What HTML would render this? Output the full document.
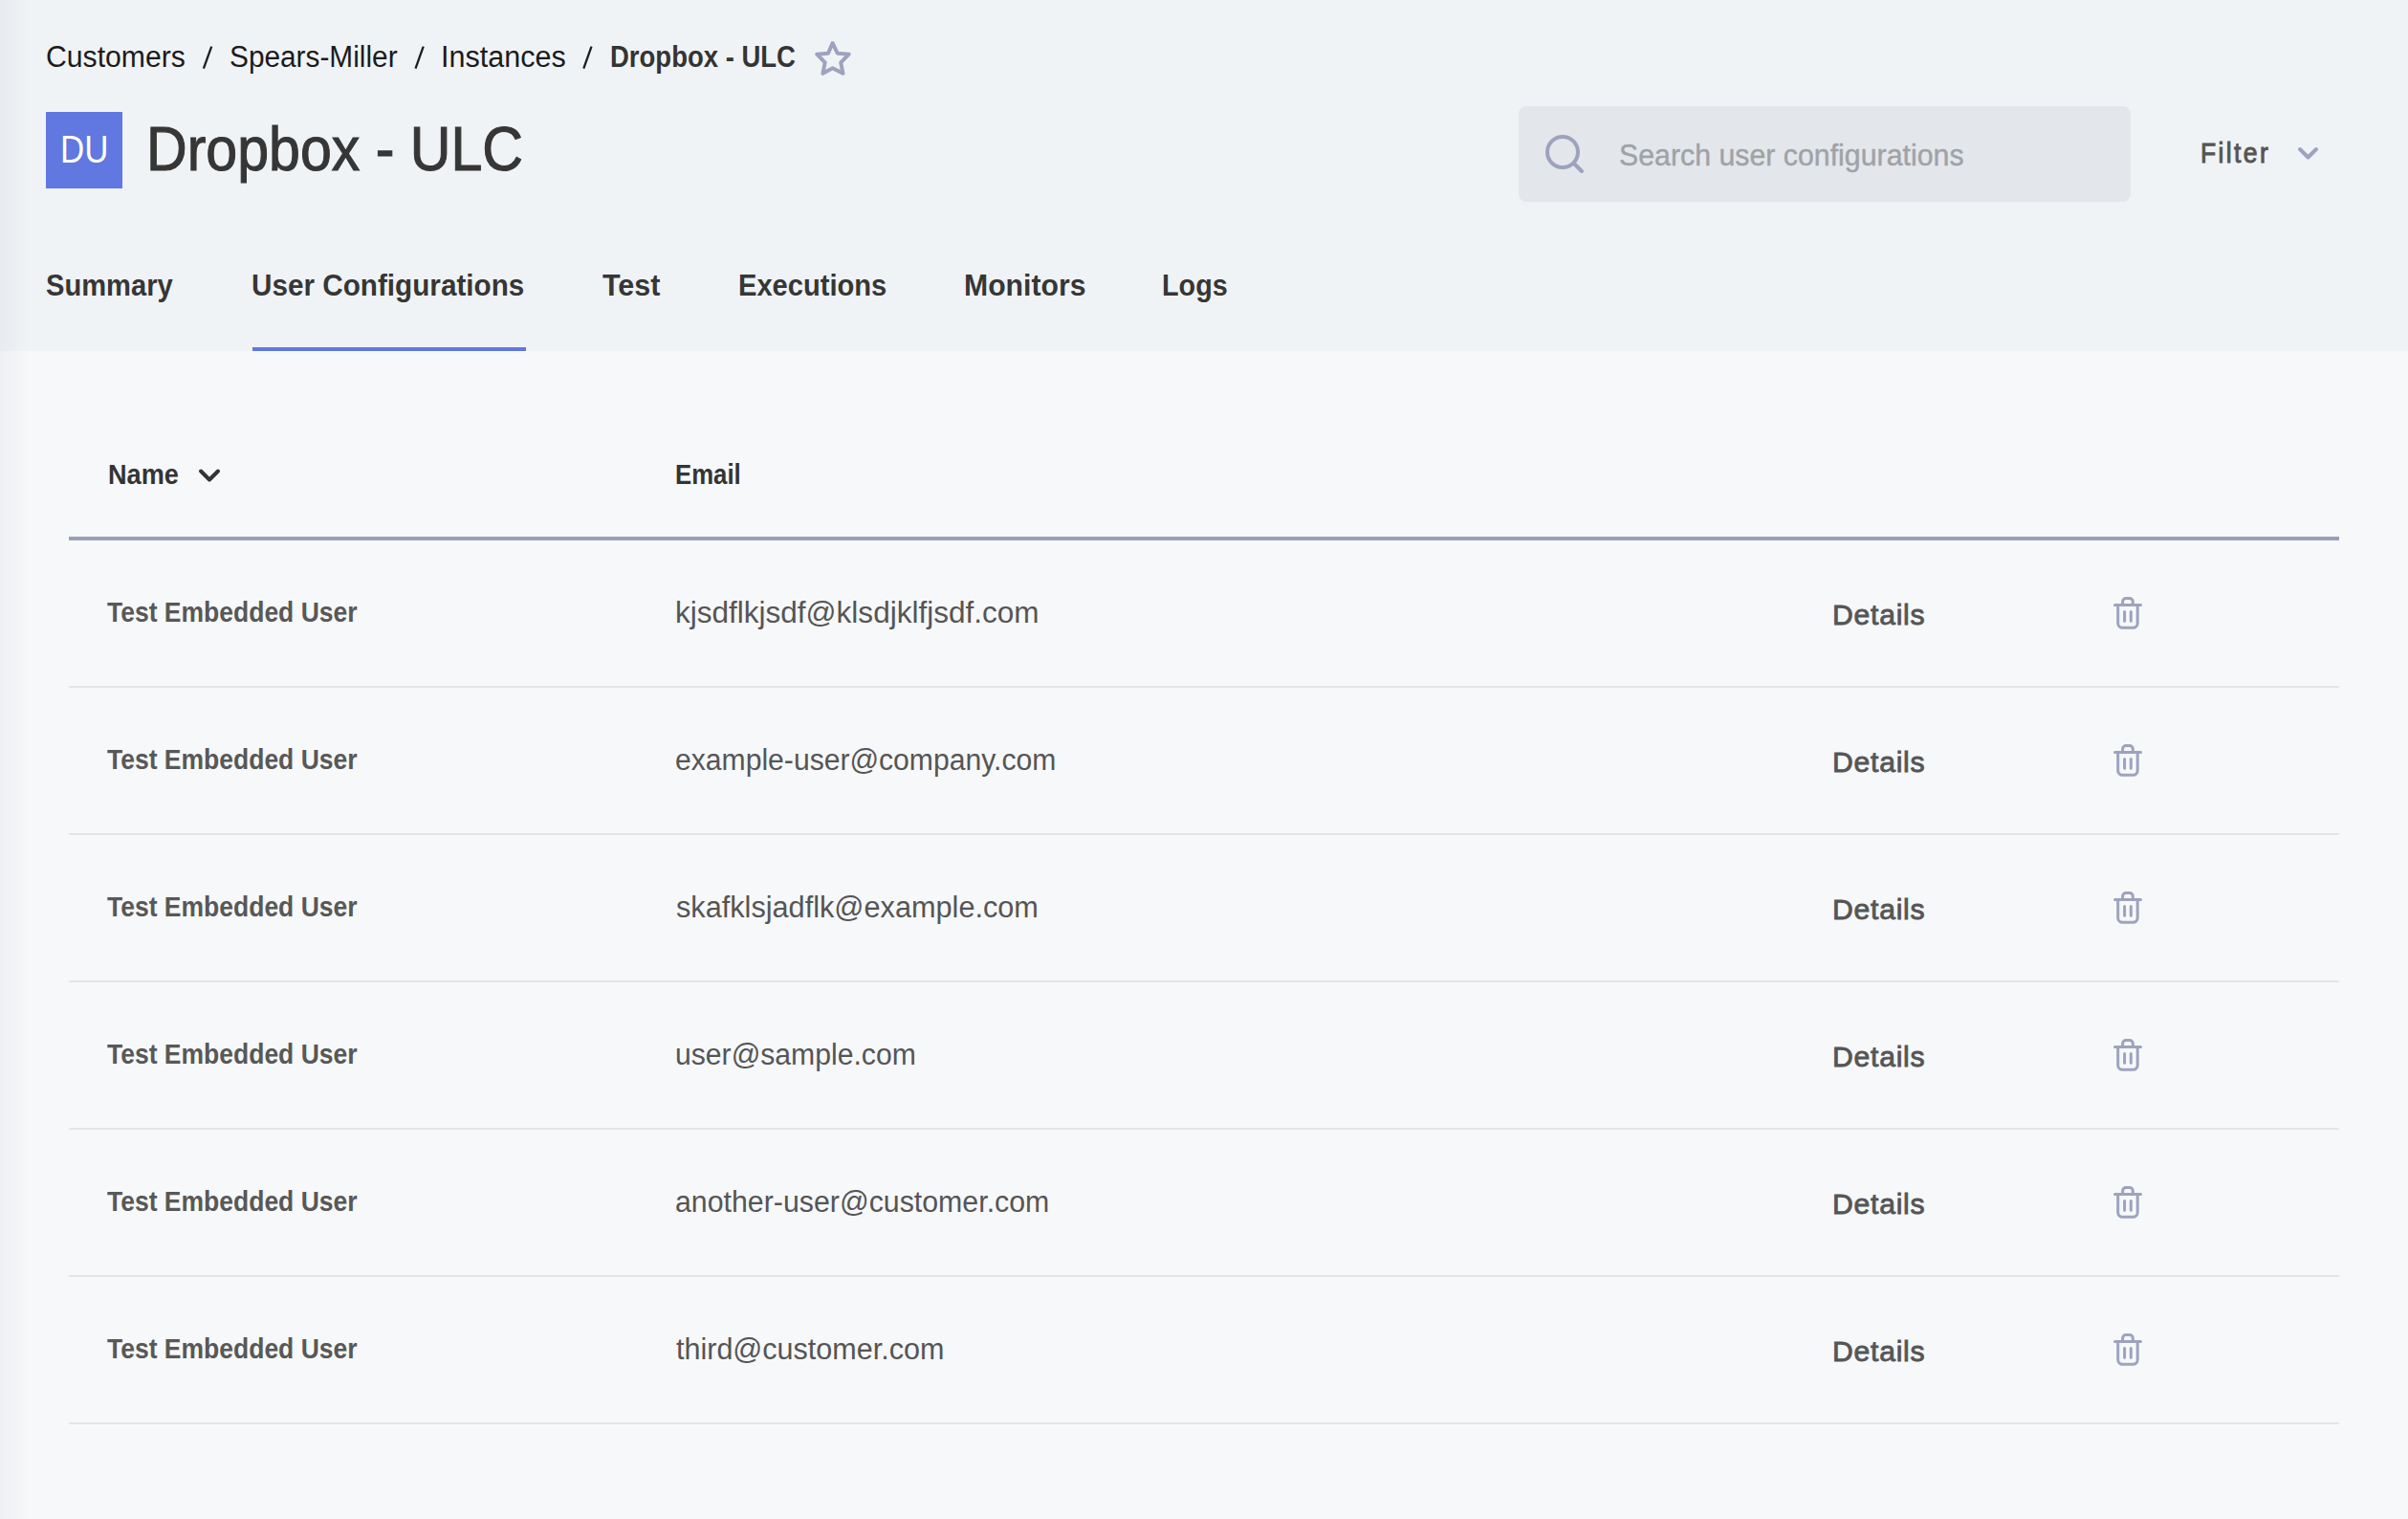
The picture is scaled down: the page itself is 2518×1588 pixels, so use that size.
<!DOCTYPE html>
<html><head><meta charset="utf-8"><style>
*{margin:0;padding:0;box-sizing:border-box}
html,body{width:2518px;height:1588px;overflow:hidden}
body{position:relative;background:#f7f8fa;font-family:"Liberation Sans",sans-serif;}
.t{position:absolute;white-space:nowrap;line-height:1;transform-origin:0 0}
</style></head><body>
<div style="position:absolute;left:0;top:0;width:2518px;height:367px;background:#f0f3f6"></div>
<svg style="position:absolute;left:0;top:0" width="700" height="90"><g stroke="#1e1e1e" stroke-width="2.3"><path d="M221.2 48.6 L212.9 71.6"/><path d="M442.7 48.6 L434.5 71.6"/><path d="M618.5 48.6 L610.3 71.6"/></g></svg>
<svg style="position:absolute;left:840px;top:35px" width="60" height="50" viewBox="0 0 60 50"><path d="M30.6 10 L35.7 20.7 L47.7 21.7 L39.2 30.3 L41.5 41.8 L30.6 36.2 L20.4 41.8 L22.7 30.3 L14.2 21.7 L26 20.7 Z" fill="none" stroke="#9da3be" stroke-width="4" stroke-linejoin="round"/></svg>
<div style="position:absolute;left:48px;top:117px;width:80px;height:80px;background:#6078e0"></div>
<div style="position:absolute;left:1588px;top:111px;width:640px;height:100px;background:#e3e7eb;border-radius:8px"></div>
<svg style="position:absolute;left:1610px;top:135px" width="56" height="56" viewBox="0 0 56 56"><circle cx="24" cy="24" r="16" fill="none" stroke="#9da3be" stroke-width="4"/><path d="M35.5 35.5 L44 44" stroke="#9da3be" stroke-width="4" stroke-linecap="round"/></svg>
<svg style="position:absolute;left:2400px;top:150px" width="28" height="20" viewBox="0 0 28 20"><path d="M5 6 L13.5 14.5 L22 6" fill="none" stroke="#9da3be" stroke-width="4" stroke-linecap="round" stroke-linejoin="round"/></svg>
<div style="position:absolute;left:264px;top:363px;width:286px;height:4px;background:#6078e0"></div>
<svg style="position:absolute;left:204px;top:486px" width="30" height="22" viewBox="0 0 30 22"><path d="M6 6.5 L15 15.5 L24 6.5" fill="none" stroke="#343434" stroke-width="4" stroke-linecap="round" stroke-linejoin="round"/></svg>
<div style="position:absolute;left:72px;top:561px;width:2374px;height:4px;background:#9a9fb8"></div>
<svg style="position:absolute;left:2208px;top:622px" width="34" height="38" viewBox="0 0 34 38" fill="none" stroke="#9da3be" stroke-width="3" stroke-linecap="round"><path d="M3.5 10.6 H30.5"/><path d="M11.6 10 V7 a3.5 3.5 0 0 1 3.5 -3.5 h3.7 a3.5 3.5 0 0 1 3.5 3.5 V10" stroke-linecap="butt"/><path d="M6.7 11 V29.5 a4.8 4.8 0 0 0 4.8 4.8 h10.9 a4.8 4.8 0 0 0 4.8 -4.8 V11" stroke-linecap="butt"/><path d="M13.6 17.5 V27.2 M20.3 17.5 V27.2"/></svg>
<div style="position:absolute;left:72px;top:717px;width:2374px;height:2px;background:#e2e6ea"></div>
<svg style="position:absolute;left:2208px;top:776px" width="34" height="38" viewBox="0 0 34 38" fill="none" stroke="#9da3be" stroke-width="3" stroke-linecap="round"><path d="M3.5 10.6 H30.5"/><path d="M11.6 10 V7 a3.5 3.5 0 0 1 3.5 -3.5 h3.7 a3.5 3.5 0 0 1 3.5 3.5 V10" stroke-linecap="butt"/><path d="M6.7 11 V29.5 a4.8 4.8 0 0 0 4.8 4.8 h10.9 a4.8 4.8 0 0 0 4.8 -4.8 V11" stroke-linecap="butt"/><path d="M13.6 17.5 V27.2 M20.3 17.5 V27.2"/></svg>
<div style="position:absolute;left:72px;top:871px;width:2374px;height:2px;background:#e2e6ea"></div>
<svg style="position:absolute;left:2208px;top:930px" width="34" height="38" viewBox="0 0 34 38" fill="none" stroke="#9da3be" stroke-width="3" stroke-linecap="round"><path d="M3.5 10.6 H30.5"/><path d="M11.6 10 V7 a3.5 3.5 0 0 1 3.5 -3.5 h3.7 a3.5 3.5 0 0 1 3.5 3.5 V10" stroke-linecap="butt"/><path d="M6.7 11 V29.5 a4.8 4.8 0 0 0 4.8 4.8 h10.9 a4.8 4.8 0 0 0 4.8 -4.8 V11" stroke-linecap="butt"/><path d="M13.6 17.5 V27.2 M20.3 17.5 V27.2"/></svg>
<div style="position:absolute;left:72px;top:1025px;width:2374px;height:2px;background:#e2e6ea"></div>
<svg style="position:absolute;left:2208px;top:1084px" width="34" height="38" viewBox="0 0 34 38" fill="none" stroke="#9da3be" stroke-width="3" stroke-linecap="round"><path d="M3.5 10.6 H30.5"/><path d="M11.6 10 V7 a3.5 3.5 0 0 1 3.5 -3.5 h3.7 a3.5 3.5 0 0 1 3.5 3.5 V10" stroke-linecap="butt"/><path d="M6.7 11 V29.5 a4.8 4.8 0 0 0 4.8 4.8 h10.9 a4.8 4.8 0 0 0 4.8 -4.8 V11" stroke-linecap="butt"/><path d="M13.6 17.5 V27.2 M20.3 17.5 V27.2"/></svg>
<div style="position:absolute;left:72px;top:1179px;width:2374px;height:2px;background:#e2e6ea"></div>
<svg style="position:absolute;left:2208px;top:1238px" width="34" height="38" viewBox="0 0 34 38" fill="none" stroke="#9da3be" stroke-width="3" stroke-linecap="round"><path d="M3.5 10.6 H30.5"/><path d="M11.6 10 V7 a3.5 3.5 0 0 1 3.5 -3.5 h3.7 a3.5 3.5 0 0 1 3.5 3.5 V10" stroke-linecap="butt"/><path d="M6.7 11 V29.5 a4.8 4.8 0 0 0 4.8 4.8 h10.9 a4.8 4.8 0 0 0 4.8 -4.8 V11" stroke-linecap="butt"/><path d="M13.6 17.5 V27.2 M20.3 17.5 V27.2"/></svg>
<div style="position:absolute;left:72px;top:1333px;width:2374px;height:2px;background:#e2e6ea"></div>
<svg style="position:absolute;left:2208px;top:1392px" width="34" height="38" viewBox="0 0 34 38" fill="none" stroke="#9da3be" stroke-width="3" stroke-linecap="round"><path d="M3.5 10.6 H30.5"/><path d="M11.6 10 V7 a3.5 3.5 0 0 1 3.5 -3.5 h3.7 a3.5 3.5 0 0 1 3.5 3.5 V10" stroke-linecap="butt"/><path d="M6.7 11 V29.5 a4.8 4.8 0 0 0 4.8 4.8 h10.9 a4.8 4.8 0 0 0 4.8 -4.8 V11" stroke-linecap="butt"/><path d="M13.6 17.5 V27.2 M20.3 17.5 V27.2"/></svg>
<div style="position:absolute;left:72px;top:1487px;width:2374px;height:2px;background:#e2e6ea"></div>
<div class="t" style="left:48.42px;top:44px;font-size:31px;color:#1b1b1b;transform:scaleX(0.9733);">Customers</div>
<div class="t" style="left:240.04px;top:44px;font-size:31px;color:#1b1b1b;transform:scaleX(0.9615);">Spears-Miller</div>
<div class="t" style="left:461.03px;top:44px;font-size:31px;color:#1b1b1b;transform:scaleX(0.9846);">Instances</div>
<div class="t" style="left:637.72px;top:44px;font-size:31px;font-weight:bold;color:#343434;transform:scaleX(0.8868);">Dropbox - ULC</div>
<div class="t" style="left:152.71px;top:123.8px;font-size:64px;color:#363636;-webkit-text-stroke:1.1px #363636;transform:scaleX(0.9231);">Dropbox - ULC</div>
<div class="t" style="left:63.37px;top:135.9px;font-size:40px;color:#fff;transform:scaleX(0.8723);">DU</div>
<div class="t" style="left:48.22px;top:283px;font-size:31px;font-weight:bold;color:#363636;transform:scaleX(0.9391);">Summary</div>
<div class="t" style="left:263.26px;top:283px;font-size:31px;font-weight:bold;color:#363636;transform:scaleX(0.9575);">User Configurations</div>
<div class="t" style="left:630.00px;top:283px;font-size:31px;font-weight:bold;color:#363636;transform:scaleX(0.9839);">Test</div>
<div class="t" style="left:772.06px;top:283px;font-size:31px;font-weight:bold;color:#363636;transform:scaleX(0.9390);">Executions</div>
<div class="t" style="left:1008.15px;top:283px;font-size:31px;font-weight:bold;color:#363636;transform:scaleX(0.9738);">Monitors</div>
<div class="t" style="left:1215.38px;top:283px;font-size:31px;font-weight:bold;color:#363636;transform:scaleX(0.9280);">Logs</div>
<div class="t" style="left:1692.62px;top:147.1px;font-size:31px;color:#a0a2a6;-webkit-text-stroke:0.4px #a0a2a6;transform:scaleX(0.9777);">Search user configurations</div>
<div class="t" style="left:2301.00px;top:146.3px;font-size:29px;color:#555;-webkit-text-stroke:0.95px #555;letter-spacing:2.6px;transform:scaleX(0.9136);">Filter</div>
<div class="t" style="left:112.62px;top:481.6px;font-size:29px;font-weight:bold;color:#343434;transform:scaleX(0.9354);">Name</div>
<div class="t" style="left:705.52px;top:481.6px;font-size:29px;font-weight:bold;color:#343434;transform:scaleX(0.8882);">Email</div>
<div class="t" style="left:112.46px;top:625.75px;font-size:29px;font-weight:bold;color:#585858;transform:scaleX(0.9136);">Test Embedded User</div>
<div class="t" style="left:705.87px;top:625.3px;font-size:31px;color:#555;transform:scaleX(1.0167);">kjsdflkjsdf@klsdjklfjsdf.com</div>
<div class="t" style="left:1916.39px;top:627.5px;font-size:30px;color:#555;-webkit-text-stroke:0.85px #555;letter-spacing:0.75px;transform:scaleX(1.0044);">Details</div>
<div class="t" style="left:112.46px;top:779.75px;font-size:29px;font-weight:bold;color:#585858;transform:scaleX(0.9136);">Test Embedded User</div>
<div class="t" style="left:705.91px;top:779.3px;font-size:31px;color:#555;transform:scaleX(0.9716);">example-user@company.com</div>
<div class="t" style="left:1916.39px;top:781.5px;font-size:30px;color:#555;-webkit-text-stroke:0.85px #555;letter-spacing:0.75px;transform:scaleX(1.0044);">Details</div>
<div class="t" style="left:112.46px;top:933.75px;font-size:29px;font-weight:bold;color:#585858;transform:scaleX(0.9136);">Test Embedded User</div>
<div class="t" style="left:706.50px;top:933.3px;font-size:31px;color:#555;transform:scaleX(0.9895);">skafklsjadflk@example.com</div>
<div class="t" style="left:1916.39px;top:935.5px;font-size:30px;color:#555;-webkit-text-stroke:0.85px #555;letter-spacing:0.75px;transform:scaleX(1.0044);">Details</div>
<div class="t" style="left:112.46px;top:1087.75px;font-size:29px;font-weight:bold;color:#585858;transform:scaleX(0.9136);">Test Embedded User</div>
<div class="t" style="left:705.94px;top:1087.3px;font-size:31px;color:#555;transform:scaleX(0.9727);">user@sample.com</div>
<div class="t" style="left:1916.39px;top:1089.5px;font-size:30px;color:#555;-webkit-text-stroke:0.85px #555;letter-spacing:0.75px;transform:scaleX(1.0044);">Details</div>
<div class="t" style="left:112.46px;top:1241.75px;font-size:29px;font-weight:bold;color:#585858;transform:scaleX(0.9136);">Test Embedded User</div>
<div class="t" style="left:705.51px;top:1241.3px;font-size:31px;color:#555;transform:scaleX(0.9779);">another-user@customer.com</div>
<div class="t" style="left:1916.39px;top:1243.5px;font-size:30px;color:#555;-webkit-text-stroke:0.85px #555;letter-spacing:0.75px;transform:scaleX(1.0044);">Details</div>
<div class="t" style="left:112.46px;top:1395.75px;font-size:29px;font-weight:bold;color:#585858;transform:scaleX(0.9136);">Test Embedded User</div>
<div class="t" style="left:706.89px;top:1395.3px;font-size:31px;color:#555;transform:scaleX(0.9845);">third@customer.com</div>
<div class="t" style="left:1916.39px;top:1397.5px;font-size:30px;color:#555;-webkit-text-stroke:0.85px #555;letter-spacing:0.75px;transform:scaleX(1.0044);">Details</div>
<div style="position:absolute;left:0;top:0;width:30px;height:1588px;background:linear-gradient(to right,rgba(0,0,30,0.035),rgba(0,0,30,0))"></div>
</body></html>
